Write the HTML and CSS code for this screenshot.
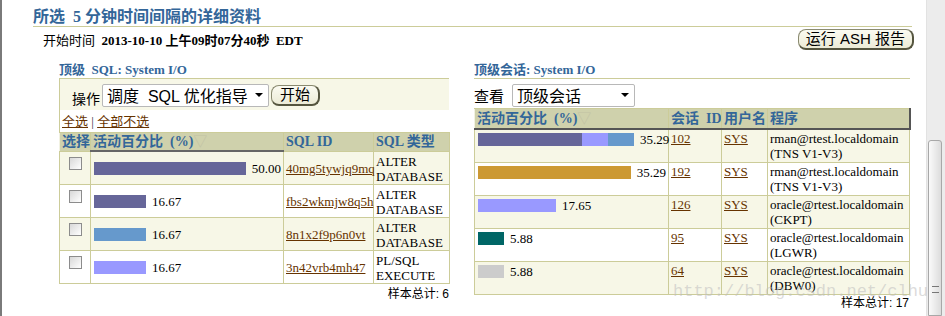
FILE: index.html
```html
<!DOCTYPE html>
<html>
<head>
    <title>ASH 详细资料</title>
    <link rel="stylesheet" href="styles.css">
</head>
<body>
    <div class="page">
        <h1 class="title">所选&nbsp; 5 分钟时间间隔的详细资料</h1>

        <div class="info">
            <span>开始时间&nbsp; <b>2013-10-10 上午09时07分40秒&nbsp; EDT</b></span>
            <span class="btn btn-wide">运行 ASH 报告</span>
        </div>

        <div class="columns">
            <div class="col">
                <h2 class="sub">顶级&nbsp; SQL: System I/O</h2>
                <div class="boxed">
                    <div class="actions">
                        <span class="lbl">操作</span>
                        <span class="select sel-sql">调度&nbsp; SQL 优化指导<i class="arrow"></i></span>
                        <span class="btn">开始</span>
                    </div>
                    <div class="links"><a href="#">全选</a> | <a href="#">全部不选</a></div>
                    <table class="grid grid-sql">
                        <colgroup>
                            <col style="width:31px"><col style="width:193px"><col style="width:90px"><col style="width:76px">
                        </colgroup>
                        <tr>
                            <th>选择</th>
                            <th class="sorted">活动百分比&nbsp; (%)<span class="sort">▽</span></th>
                            <th>SQL ID</th>
                            <th>SQL 类型</th>
                        </tr>
                        <tr class="odd">
                            <td class="center"><span class="check"></span></td>
                            <td><div class="barcell"><span class="bar" style="width:156px;background:#666699"></span>50.00</div></td>
                            <td><a href="#">40mg5tywjq9mq</a></td>
                            <td>ALTER DATABASE</td>
                        </tr>
                        <tr>
                            <td class="center"><span class="check"></span></td>
                            <td><div class="barcell"><span class="bar" style="width:52px;background:#666699"></span>16.67</div></td>
                            <td><a href="#">fbs2wkmjw8q5h</a></td>
                            <td>ALTER DATABASE</td>
                        </tr>
                        <tr class="odd">
                            <td class="center"><span class="check"></span></td>
                            <td><div class="barcell"><span class="bar" style="width:52px;background:#6699cc"></span>16.67</div></td>
                            <td><a href="#">8n1x2f9p6n0vt</a></td>
                            <td>ALTER DATABASE</td>
                        </tr>
                        <tr>
                            <td class="center"><span class="check"></span></td>
                            <td><div class="barcell"><span class="bar" style="width:52px;background:#9999ff"></span>16.67</div></td>
                            <td><a href="#">3n42vrb4mh47</a></td>
                            <td>PL/SQL EXECUTE</td>
                        </tr>
                    </table>
                </div>
                <div class="total">样本总计: 6</div>
            </div>

            <div class="col">
                <h2 class="sub">顶级会话: System I/O</h2>
                <div class="view">
                    <span class="lbl">查看</span>
                    <span class="select sel-view">顶级会话<i class="arrow"></i></span>
                </div>
                <table class="grid grid-sess">
                    <colgroup>
                        <col style="width:194px"><col style="width:53px"><col style="width:46px"><col style="width:142px">
                    </colgroup>
                    <tr>
                        <th>活动百分比&nbsp; (%)<span class="sort">▽</span></th>
                        <th>会话&nbsp; ID</th>
                        <th>用户名</th>
                        <th class="last">程序</th>
                    </tr>
                    <tr class="odd">
                        <td><div class="barcell"><span class="stack"><span class="bar" style="width:104px;background:#666699"></span><span class="bar" style="width:26px;background:#9999ff"></span><span class="bar" style="width:26px;background:#6699cc"></span></span>35.29</div></td>
                        <td><a href="#">102</a></td>
                        <td><a href="#">SYS</a></td>
                        <td>rman@rtest.localdomain (TNS V1-V3)</td>
                    </tr>
                    <tr>
                        <td><div class="barcell"><span class="bar" style="width:156px;background:#cc9933"></span>35.29</div></td>
                        <td><a href="#">192</a></td>
                        <td><a href="#">SYS</a></td>
                        <td>rman@rtest.localdomain (TNS V1-V3)</td>
                    </tr>
                    <tr class="odd">
                        <td><div class="barcell"><span class="bar" style="width:78px;background:#9999ff"></span>17.65</div></td>
                        <td><a href="#">126</a></td>
                        <td><a href="#">SYS</a></td>
                        <td>oracle@rtest.localdomain (CKPT)</td>
                    </tr>
                    <tr>
                        <td><div class="barcell"><span class="bar" style="width:26px;background:#006666"></span>5.88</div></td>
                        <td><a href="#">95</a></td>
                        <td><a href="#">SYS</a></td>
                        <td>oracle@rtest.localdomain (LGWR)</td>
                    </tr>
                    <tr class="odd">
                        <td><div class="barcell"><span class="bar" style="width:26px;background:#cccccc"></span>5.88</div></td>
                        <td><a href="#">64</a></td>
                        <td><a href="#">SYS</a></td>
                        <td>oracle@rtest.localdomain (DBW0)</td>
                    </tr>
                </table>
                <div class="total total-sess">样本总计: 17</div>
            </div>
        </div>

        <div class="watermark">http://blog.csdn.net/clhua</div>
    </div>
    <div class="scrollbar"><div class="thumb"><span class="grip"></span></div></div>
</body>
</html>
```

FILE: styles.css
```css
body { margin: 0; display: flex; height: 316px; overflow: hidden; background: #fff; font-family: "Liberation Serif", "Noto Sans CJK SC", serif; font-size: 13px; color: #000; }
.page { flex: 1; position: relative; border-left: 2px solid #7a7a7a; padding: 7px 12px 0 31px; }
.title { margin: 0 2px 0 0; font-size: 16px; line-height: 19px; font-weight: bold; color: #336699; border-bottom: 1px solid #cccc99; }
.info { display: flex; justify-content: space-between; align-items: center; height: 22px; margin-top: 1px; padding-left: 10px; }
.info b { font-weight: bold; }
.btn { display: inline-block; font-family: "Liberation Sans", "Noto Sans CJK SC", sans-serif; font-size: 15px; line-height: 16px; padding: 1px 8px 1px; background: linear-gradient(#fbfbf1, #ecebd6); border: 1px solid #8a8a70; border-right: 2px solid #55553f; border-bottom: 2px solid #55553f; border-radius: 8px; }
.btn-wide { padding: 1px 7px; }
.columns { display: grid; grid-template-columns: 390px 436px; column-gap: 25px; margin: 11px 0 0 26px; }
.sub { margin: 0; font-size: 13px; line-height: 17px; font-weight: bold; color: #336699; border-bottom: 1px solid #cccc99; }
.boxed { border-left: 1px solid #cccc99; }
.actions { display: flex; align-items: center; gap: 2px; height: 30px; padding: 1px 0 0 12px; background: #f7f7e7; }
.lbl { font-family: "Liberation Sans", "Noto Sans CJK SC", sans-serif; font-size: 14px; }
.actions .lbl { margin-top: 6px; }
.select { display: inline-flex; align-items: center; justify-content: space-between; height: 21px; padding: 0 5px 0 4px; background: #fff; border: 1px solid #b8b8b8; border-radius: 2px; font-family: "Liberation Sans", "Noto Sans CJK SC", sans-serif; font-size: 16px; }
.sel-sql { width: 156px; }
.sel-view { width: 112px; }
.arrow { width: 0; height: 0; border-left: 4px solid transparent; border-right: 4px solid transparent; border-top: 4px solid #000; }
.links { padding: 4px 0 3px 2px; line-height: 15px; font-size: 13px; color: #333; }
a { color: #663300; }
.grid { border-collapse: collapse; table-layout: fixed; }
.grid-sql { width: 390px; margin-left: -1px; }
.grid-sess { width: 435px; }
.grid th { background: #cfd1ac; color: #336699; font-weight: bold; text-align: left; font-size: 14px; line-height: 16px; padding: 1px 2px 0; border: 1px solid #cccc99; border-left-color: #f2f2e2; white-space: nowrap; overflow: hidden; }
.grid-sql th.sorted { border-left: 1px solid #666; border-bottom: 2px solid #666; }
.grid-sess th { border-bottom: 2px solid #555; padding: 2px 2px 1px; }
.grid-sess th.last { border-right: 2px solid #555; }
.sort { color: #c2c2a4; font-weight: normal; }
.grid td { border: 1px solid #cccc99; line-height: 15px; padding: 2px 2px 0; vertical-align: middle; }
.grid-sess td { vertical-align: top; padding: 1px 2px 1px; }
.grid tr.odd td { background: #f7f7e7; }
.grid td.center { text-align: center; vertical-align: top; padding-top: 5px; }
.check { display: block; margin: 0 auto; width: 11px; height: 11px; border: 1px solid #8c8c8c; background: linear-gradient(135deg, #d8d8d8, #ffffff); }
.barcell { display: flex; align-items: center; height: 15px; gap: 6px; padding-left: 1px; }
.grid-sess .barcell { height: 17px; padding-left: 1px; }
.bar { display: inline-block; height: 13px; }
.stack { display: inline-flex; }
.total { text-align: right; font-family: "Liberation Sans", "Noto Sans CJK SC", sans-serif; font-size: 12px; line-height: 14px; margin-top: 3px; }
.total-sess { margin-top: 1px; padding-right: 1px; }
.view { display: flex; align-items: center; gap: 8px; height: 26px; margin-top: 3px; }
.view .lbl { font-size: 15px; }
.watermark { position: absolute; left: 671px; top: 282px; font-family: "Liberation Mono", monospace; font-size: 17px; color: rgba(190, 190, 190, 0.55); white-space: nowrap; }
.scrollbar { width: 18px; background: #ececec; border-left: 1px solid #e2e2e2; display: flex; flex-direction: column; }
.thumb { margin: 140px 3px 0 1px; flex: 1; background: linear-gradient(90deg, #fafafa, #dcdcdc); border: 1px solid #a8a8a8; border-radius: 3px 3px 0 0; position: relative; }
.grip { position: absolute; left: 3px; top: 145px; width: 7px; height: 5px; border-top: 1px solid #777; border-bottom: 1px solid #777; }
```
